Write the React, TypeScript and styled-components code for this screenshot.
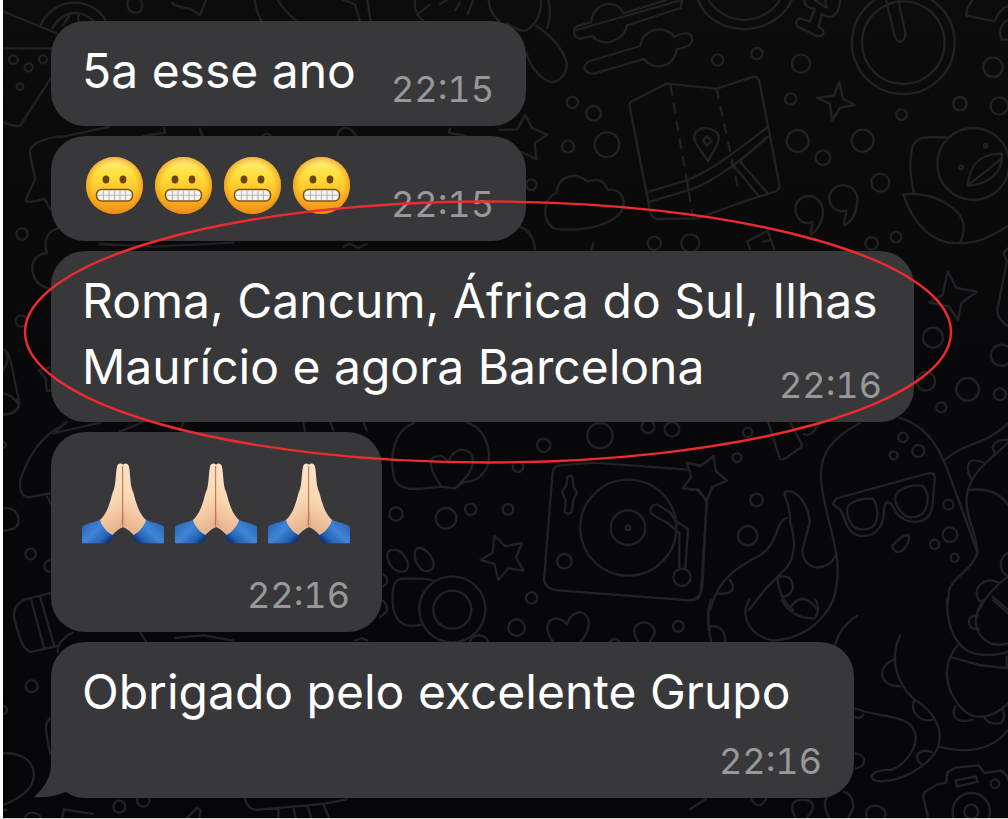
import React from "react";
import styled, { createGlobalStyle } from "styled-components";

const GlobalStyle = createGlobalStyle`
  *, *::before, *::after { box-sizing: border-box; }
  body { margin: 0; background: #ffffff; }
`;

const Page = styled.main`
  position: relative;
  min-height: 100vh;
  padding: 21px 48px 20px;
  border-left: 3px solid #ffffff;
  border-bottom: 1px solid #d8d8d8;
  background: linear-gradient(#0c0c0d, #08080a 55%, #060608);
  font-family: Inter, "Liberation Sans", sans-serif;
  overflow: hidden;
`;

const Wallpaper = styled.svg`
  position: absolute;
  inset: 0;
  width: 100%;
  height: 100%;
  fill: none;
  stroke: #222224;
  stroke-width: 7;
  stroke-linecap: round;
  stroke-linejoin: round;
`;

const Chat = styled.ul`
  position: relative;
  display: flex;
  flex-direction: column;
  align-items: flex-start;
  gap: 10px;
  margin: 0;
  padding: 0;
  list-style: none;
`;

const Bubble = styled.li<{ $width: number; $stacked?: boolean }>`
  position: relative;
  display: grid;
  grid-template-columns: minmax(0, 1fr);
  row-gap: ${(p) => (p.$stacked ? 21 : 0)}px;
  width: ${(p) => p.$width}px;
  max-width: 100%;
  padding: 17px 32px 22px 31px;
  border-radius: 34px;
  background: #38383a;

  > * {
    grid-area: ${(p) => (p.$stacked ? "auto" : "1 / 1")};
  }
`;

const Text = styled.p`
  margin: 0;
  color: #ffffff;
  font-size: 48px;
  line-height: 66px;
  white-space: nowrap;
`;

const Time = styled.time`
  place-self: end;
  color: #98989b;
  font-size: 36px;
  line-height: 30px;
  font-variant-numeric: tabular-nums;
`;

const EmojiRow = styled.div<{ $large?: boolean }>`
  display: flex;
  align-items: center;
  gap: ${(p) => (p.$large ? 11 : 12)}px;
  height: ${(p) => (p.$large ? 110 : 66)}px;
  padding-left: ${(p) => (p.$large ? 0 : 4)}px;
  padding-bottom: 2px;
`;

const Face = styled.svg`
  flex: none;
  width: 57px;
  height: 57px;
`;

const Hands = styled.svg`
  flex: none;
  width: 82px;
  height: 82px;
`;

const Tail = styled.svg`
  position: absolute;
  left: -17px;
  bottom: 0;
  width: 60px;
  height: 44px;
  fill: #38383a;
`;

const Highlight = styled.svg`
  position: absolute;
  inset: 0;
  width: 100%;
  height: 100%;
  fill: none;
  stroke: #ee2b31;
  stroke-width: 2.4;
  pointer-events: none;
`;

const Grimace = () => (
  <Face viewBox="0 0 57 57" role="img" aria-label="😬">
    <defs>
      <linearGradient id="skin" x1="0" y1="0" x2="0" y2="1">
        <stop offset="0" stopColor="#fff08a" />
        <stop offset="0.3" stopColor="#ffe13e" />
        <stop offset="0.65" stopColor="#fdbf27" />
        <stop offset="1" stopColor="#f08d17" />
      </linearGradient>
      <radialGradient id="rim">
        <stop offset="0.75" stopColor="#f59a1b" stopOpacity="0" />
        <stop offset="1" stopColor="#ef8d14" stopOpacity="0.65" />
      </radialGradient>
    </defs>
    <circle cx="28.5" cy="28.5" r="28.5" fill="url(#skin)" />
    <circle cx="28.5" cy="28.5" r="28.5" fill="url(#rim)" />
    <ellipse cx="20" cy="22.5" rx="3.4" ry="4" fill="#6b4408" />
    <ellipse cx="37" cy="22.5" rx="3.4" ry="4" fill="#6b4408" />
    <rect x="10.5" y="32.5" width="36" height="11.5" rx="5" fill="#f6f5f3" stroke="#7c540f" strokeWidth="1.6" />
    <path d="M12 38.2H45M17.5 33.5V43M23 33.5V43M28.5 33.5V43M34 33.5V43M39.5 33.5V43" stroke="#b9b6b0" strokeWidth="1.1" />
  </Face>
);

const Pray = () => (
  <Hands viewBox="0 0 246 246" role="img" aria-label="🙏🏻">
    <defs>
      <linearGradient id="palm" x1="0" y1="0" x2="0.2" y2="1">
        <stop offset="0" stopColor="#fde6cf" />
        <stop offset="0.6" stopColor="#fbd8b5" />
        <stop offset="1" stopColor="#e9b68e" />
      </linearGradient>
      <linearGradient id="sleeve" x1="0" y1="0" x2="1" y2="0.7">
        <stop offset="0" stopColor="#255fb0" />
        <stop offset="0.5" stopColor="#4084d8" />
        <stop offset="0.8" stopColor="#2465b8" />
        <stop offset="1" stopColor="#0c2e6b" />
      </linearGradient>
    </defs>
    {["", "translate(246 0) scale(-1 1)"].map((flip) => (
      <g key={flip} transform={flip}>
        <path d="M54 173C38 182 18 181 0 194V244H77C86 237 93 227 100 216Z" fill="url(#sleeve)" />
        <path d="M124 10C119 2 108 2 105 14C101 33 102 59 96 82C89 96 88 112 82 126C76 145 67 162 54 174C59 191 72 208 91 219C103 207 112 199 124 195Z" fill="url(#palm)" />
        <path d="M124 12V194" stroke="#b66d45" strokeWidth="3" />
        <path d="M113 195C117 192 121 178 122 150" stroke="#dca17a" strokeWidth="3" fill="none" />
      </g>
    ))}
  </Hands>
);

type Dot = [number, number, number];

const Dots = ({ at }: { at: Dot[] }) => (
  <>
    {at.map(([x, y, r]) => (
      <circle key={`${x}-${y}`} cx={x} cy={y} r={r} />
    ))}
  </>
);

const Doodles = () => (
  <Wallpaper viewBox="3 0 1005 818" preserveAspectRatio="xMinYMin slice" aria-hidden="true">
    {/* pizza, ribbon and cloud down the left edge */}
    <g transform="scale(0.3333)">
      <path d="M9 34L172 101M9 145H158M9 366C25 375 42 379 61 377L155 231M122 74C140 35 180 8 222 8C265 8 300 30 318 63M158 84C178 50 207 35 238 40C258 44 272 54 281 64M188 76L208 48M235 64V42" />
      <path d="M180 409C142 414 109 423 92 445C86 466 98 500 106 535C98 558 84 580 77 604C96 606 117 603 133 596C141 604 141 620 155 629M180 412L330 380M175 685C141 692 130 725 141 759C105 764 92 787 98 817C104 848 126 863 158 868" />
      <path d="M9 1049C20 1048 25 1060 31 1080L58 1208C58 1230 40 1240 9 1245M9 1110C25 1090 25 1068 18 1054M9 1180C28 1183 43 1196 53 1210M116 1110L137 1134L140 1172H158M116 1110L152 1102" />
      <path d="M384 0C377 28 394 40 412 38C430 35 428 10 423 0M516 8C530 22 548 22 570 26L600 45L617 2M764 0C767 28 775 46 785 64M833 0C845 22 865 42 890 64M1030 0L1065 13L1080 64M1102 0L1112 64M1246 0C1240 25 1248 45 1272 64M1252 44L1290 14M1366 30L1380 8M1403 42L1420 0M1466 0C1467 26 1480 48 1498 65M1340 0L1320 12" />
      <path d="M430 408L496 398L492 384M600 386L606 406M1012 408C1014 389 1034 374 1054 390L1070 408M1350 386L1346 398L1400 408M300 732L460 740L700 728M1030 740L1050 730L1074 744L1100 732" />
      <Dots at={[[40, 179, 13], [86, 202, 12], [129, 178, 12], [60, 260, 10], [66, 702, 17], [64, 963, 17], [800, 417, 16]]} />
    </g>

    {/* tools, map, pan, avocado and planet along the top */}
    <g transform="translate(500 0) scale(0.3333)">
      <path d="M122 0C127 33 112 69 80 91C60 95 40 82 20 70M145 0C153 30 151 60 141 86M108 77C151 104 188 145 200 187C203 218 180 247 153 246C121 239 92 202 80 160" />
      <path d="M222 92C222 76 245 76 274 66C278 5 353 -5 370 40L500 0M546 0L542 24L381 76C371 126 305 144 278 108L245 115C229 118 222 107 222 92ZM267 184L420 138C430 83 495 74 522 110L557 99C585 100 580 134 560 139L530 149C523 202 460 215 432 177L285 220C258 226 240 199 267 184Z" />
      <path d="M594 0C638 114 818 119 876 0M626 0C676 78 787 80 840 0M912 0C913 17 924 23 944 27L930 65L905 57C888 53 882 77 897 82L950 108C976 113 977 87 956 81L965 42C999 66 1020 34 1020 0M944 0L980 23L976 0" />
      <circle cx="1210" cy="128" r="154" />
      <circle cx="1210" cy="128" r="124" />
      <path d="M1158 0L1183 102C1190 139 1220 127 1216 97L1195 0M1418 0C1405 16 1398 34 1400 47L1484 64C1491 44 1500 27 1524 18M1524 60C1502 70 1495 98 1505 119H1524" />
      <path d="M392 306L499 251L650 266L761 230Q774 230 778 244L838 553Q841 568 827 574L740 602L593 655L475 657Q455 655 451 637L390 325Q387 312 392 306ZM444 576L560 541C637 511 717 447 802 382M449 605L570 570C650 541 730 475 804 411M560 541L565 570M693 487L774 585M719 484L802 578M719 484L797 414" />
      <path d="M512 258L542 434L557 518L579 655M650 268L718 582" strokeDasharray="26 28" />
      <path d="M624 484C601 446 573 421 586 399C603 377 642 382 656 405C661 426 643 447 624 484Z" />
      <path d="M621 409L635 422L621 436L608 422Z" />
      <path d="M0 390L52 388L76 344L96 384L142 404L104 430L109 478L65 457M169 579C173 532 219 511 264 545C293 532 314 543 323 570C365 563 386 606 358 643C320 681 231 697 161 685C123 659 129 595 169 579M951 294L1002 286L1018 246L1029 296L1064 315L1021 323L996 361L990 311ZM937 666C906 681 880 645 888 614C909 571 968 584 969 636C969 665 951 692 934 704C929 692 939 680 937 666ZM1039 632C1013 641 983 617 988 588C998 548 1060 540 1072 592C1075 630 1056 665 1034 676C1027 663 1041 653 1039 632Z" />
      <circle cx="1420" cy="492" r="108" />
      <path d="M1403 557C1407 508 1431 459 1506 462C1510 521 1461 555 1403 557L1506 475M1242 580C1231 530 1228 475 1238 438C1254 405 1291 412 1340 412M1210 584C1240 577 1294 586 1331 606C1389 638 1406 675 1380 729C1301 736 1240 675 1210 584M1380 729C1434 731 1475 708 1524 678M58 680C91 691 102 718 105 748M742 724L803 693L823 748M742 724L750 748M790 725L814 720M280 730L274 750" />
      <Dots at={[[653, 180, 17], [771, 161, 17], [903, 191, 27], [217, 307, 17], [281, 340, 22], [321, 434, 37], [204, 440, 18], [94, 554, 16], [872, 297, 17], [893, 423, 33], [1088, 422, 33], [969, 473, 22], [1141, 548, 27], [1205, 344, 16], [1380, 311, 20], [1479, 202, 29], [1498, 318, 26], [463, 730, 20], [571, 730, 27], [1115, 730, 19], [1188, 711, 16], [1457, 437, 5], [1383, 502, 6]]} />
    </g>

    {/* sparkle beside the third message */}
    <g transform="translate(720 180) scale(0.3333)">
      <path d="M628 367L668 345L683 274L709 324L771 335L724 369L714 421L687 380L628 367M864 205L850 220L861 243L834 380C827 405 840 421 864 438" />
      <Dots at={[[639, 473, 30], [618, 604, 28], [743, 628, 34], [840, 643, 18], [664, 682, 15], [845, 526, 32]]} />
    </g>

    {/* turntable, heart and lens */}
    <g transform="translate(380 400) scale(0.3333)">
      <path d="M103 68C43 92 28 160 41 229C52 279 116 268 185 260L225 265C251 243 252 247 284 240C321 220 330 189 326 154C320 112 298 80 260 68M185 260C150 213 142 177 168 169C185 163 200 175 205 190C215 148 247 140 271 159C295 190 261 233 225 265M343 407L376 439L426 429L408 472L430 512L385 505L355 540L343 492L301 480L338 458Z" />
      <path d="M640 188L921 209M640 188L539 196Q521 198 518 216L492 540C494 557 510 569 531 571L932 601C956 602 961 588 963 570L981 305" />
      <circle cx="745" cy="383" r="144" />
      <circle cx="744" cy="383" r="52" />
      <circle cx="744" cy="383" r="7" />
      <path d="M562 231Q570 223 578 231L580 260L591 276L580 299L575 336Q565 346 554 336L557 300L546 275L559 256ZM898 507V399L862 369L824 347C800 337 814 309 834 315L870 337L886 362L924 387L916 508" />
      <circle cx="906" cy="532" r="26" />
      <path d="M920 187L961 199L990 177M920 187L934 231L908 265L953 269L981 305M23 457C35 443 62 447 76 473C91 495 84 516 65 515C38 513 17 485 23 457ZM110 445C130 439 160 465 161 493C157 521 128 517 117 499C103 485 100 456 110 445ZM164 543C137 533 101 537 68 536C39 537 36 570 38 611C42 655 65 690 123 674M270 726C278 699 319 700 324 726M520 726C485 683 507 644 542 659Q554 662 562 674C570 633 618 620 627 667C627 695 612 714 601 726M776 726C731 664 816 646 826 698L809 726M0 520Q22 525 22 545Q20 555 0 563M0 600Q24 605 20 635L0 652M690 726Q704 708 720 726M989 620Q980 650 990 690" />
      <Dots at={[[217, 628, 99], [217, 629, 57], [491, 136, 20], [660, 107, 38], [804, 80, 19], [876, 88, 22], [414, 200, 16], [48, 342, 20], [198, 355, 31], [272, 328, 17], [384, 328, 16], [553, 484, 22], [455, 594, 17], [410, 683, 25], [895, 679, 16]]} />
    </g>

    {/* diver with glasses and octopus arms */}
    <g transform="translate(690 400) scale(0.3333)">
      <path d="M0 190L32 197L71 168L77 213L111 242L67 261L50 302L25 268L0 270M50 302L37 560Q31 598 0 600M235 68L269 174Q273 183 286 175L334 141Q337 134 332 126L302 70M342 102Q363 114 387 70M510 70C430 110 387 160 393 240C399 320 439 420 443 500C443 565 431 606 414 630M628 54C703 75 739 130 764 188L831 369L862 456C851 508 787 533 777 570L771 630" />
      <path d="M428 312L440 295L714 220Q737 217 734 237C727 305 735 347 697 362C656 375 622 353 608 318C596 300 585 305 582 326C583 372 564 400 532 407C473 415 470 368 452 330ZM480 311Q510 293 550 297C567 323 565 360 551 378Q515 399 490 380C472 355 463 330 480 311ZM624 275Q658 251 699 258C718 280 718 315 699 340Q665 363 641 343C617 321 608 295 624 275Z" />
      <path d="M607 438Q634 405 655 405Q663 427 638 451C620 463 610 452 607 438ZM287 274C321 267 358 317 359 368L337 453C342 520 422 514 439 461M287 274C275 291 302 301 301 370C317 421 316 470 289 504L228 565L177 630M289 354C255 366 266 432 210 466C142 501 85 535 60 630M120 540C139 566 127 584 85 581M265 532Q306 520 309 562Q300 592 275 590M262 532Q268 600 310 630M308 613Q341 574 383 630" />
      <path d="M764 181Q786 157 849 132Q906 114 954 70M954 129C906 174 843 216 832 279C819 350 866 401 862 465M954 120Q910 118 908 145L916 163M880 187Q837 170 834 201Q831 216 843 234M836 270Q917 260 954 314M954 458Q923 475 937 515L954 530M954 530Q897 570 867 630M925 548C882 525 841 569 870 604M908 590L954 630" />
      <Dots at={[[173, 97, 14], [141, 173, 13], [200, 300, 19], [173, 407, 29], [639, 112, 14], [611, 166, 12], [685, 153, 18], [775, 314, 15], [780, 404, 22], [734, 433, 14], [794, 473, 12]]} />
    </g>
    <g transform="translate(690 600) scale(0.3333)">
      <path d="M62 0Q45 55 64 126M64 78Q105 77 106 126M177 0C150 50 176 105 249 122C322 118 391 82 430 0M275 0Q307 57 374 55Q393 31 377 0M302 20Q326 -10 350 0M501 48Q450 78 435 137M630 107C600 170 616 246 670 296C741 337 763 398 741 448C713 500 630 549 561 543C529 535 547 508 602 510C653 493 691 428 672 391C653 344 570 354 490 324M613 179C561 195 563 258 629 259M673 301C658 337 694 369 729 359M697 494C666 473 683 444 725 456M495 351Q513 358 520 344M494 460C530 463 532 500 497 505" />
      <path d="M770 0C771 70 792 153 867 163C907 168 942 161 954 154M880 0C858 32 847 75 873 108C895 132 917 139 954 130M864 46C828 42 827 91 867 88M803 136Q765 180 772 236C775 276 812 340 855 349Q907 357 954 310M785 172L866 195L954 205M950 170V205M797 318C779 350 803 371 848 359M884 354Q900 377 934 369Q950 348 937 329M747 440C835 463 909 449 954 390M910 0L954 40" />
      <path d="M703 577L740 554L768 548L773 516L798 503L866 496L883 519L930 512Q950 518 954 540M703 577C694 590 709 617 714 655M797 541L858 529L863 545L801 560Z" />
      <circle cx="844" cy="635" r="56" />
      <circle cx="844" cy="635" r="21" />
      <circle cx="915" cy="551" r="13" />
      <path d="M317 655Q294 611 323 601Q380 594 366 632L350 655M418 655Q394 609 413 590L433 576M462 575Q493 586 489 625L474 655M531 655Q520 618 557 617Q595 623 584 655M184 597Q206 635 229 597M0 628L48 597" />
    </g>

    {/* cup, barrel and hat at the lower left */}
    <g transform="translate(0 400) scale(0.3333)">
      <path d="M180 80C122 112 86 168 64 230C53 265 65 291 86 292L155 279M140 288L155 315M9 42Q49 46 56 18L50 0M9 325C45 321 57 342 56 367Q49 391 9 391M154 579L75 598Q36 615 43 656C56 709 70 754 94 756L178 737M94 601L133 746M121 592L163 740M173 757V740Q190 710 218 698M152 955Q134 963 139 1000L150 1060M9 1060C64 1058 105 1082 101 1130C99 1170 60 1195 9 1215M9 1230H20M420 696L438 724M525 714L610 706L700 722M1065 722L1086 714L1102 722" />
      <path d="M200 66L160 100L300 68M360 95L430 66M550 66L540 92M910 66L915 92M990 66L1000 92M1090 66L1100 92" />
      <path d="M75 1256Q78 1238 98 1238Q118 1240 124 1256M186 1256L192 1228L278 1242M560 1256L590 1224L602 1230L598 1256M735 1198Q745 1228 770 1230L970 1212L1040 1198M835 1230V1256M880 1225L888 1256M922 1218L935 1256M970 1212L988 1256" />
      <Dots at={[[92, 462, 16], [150, 498, 17], [95, 859, 18], [358, 1220, 18], [430, 1201, 19], [9, 135, 9], [9, 930, 12]]} />
    </g>
  </Wallpaper>
);

export default function App() {
  return (
    <>
      <GlobalStyle />
      <Page>
        <Doodles />
        <Chat>
          <Bubble $width={475}>
            <Text>5a esse ano</Text>
            <Time>22:15</Time>
          </Bubble>
          <Bubble $width={475}>
            <EmojiRow>
              <Grimace />
              <Grimace />
              <Grimace />
              <Grimace />
            </EmojiRow>
            <Time>22:15</Time>
          </Bubble>
          <Bubble $width={863}>
            <Text>
              Roma, Cancum, África do Sul, Ilhas
              <br />
              Maurício e agora Barcelona
            </Text>
            <Time>22:16</Time>
          </Bubble>
          <Bubble $width={331} $stacked>
            <EmojiRow $large>
              <Pray />
              <Pray />
              <Pray />
            </EmojiRow>
            <Time>22:16</Time>
          </Bubble>
          <Bubble $width={803} $stacked>
            <Tail viewBox="0 0 60 44" aria-hidden="true">
              <path d="M17 0V9C17 24 10 34 0 43C14 44 25 41 34 37C41 42 50 44 60 44V0Z" />
            </Tail>
            <Text>Obrigado pelo excelente Grupo</Text>
            <Time>22:16</Time>
          </Bubble>
        </Chat>
        <Highlight viewBox="3 0 1005 818" preserveAspectRatio="xMinYMin meet" aria-hidden="true">
          <ellipse cx="488" cy="332" rx="463" ry="130.5" />
        </Highlight>
      </Page>
    </>
  );
}
